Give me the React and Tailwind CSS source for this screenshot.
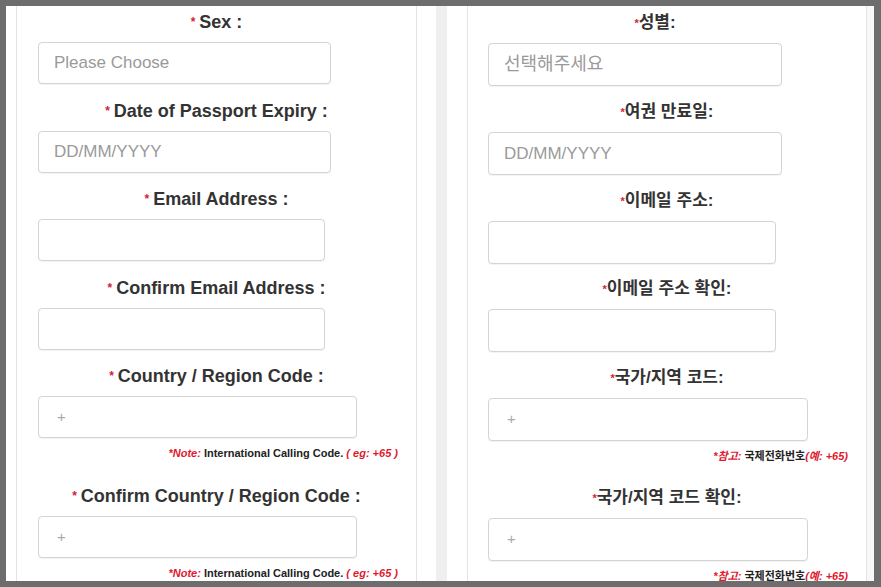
const leftFields = [
  { label: "Sex :", placeholder: "Please Choose", w: "w-[293px]" },
  { label: "Date of Passport Expiry :", placeholder: "DD/MM/YYYY", w: "w-[293px]" },
  { label: "Email Address :", placeholder: "", w: "w-[287px]" },
  { label: "Confirm Email Address :", placeholder: "", w: "w-[287px]" },
  { label: "Country / Region Code :", placeholder: "+", w: "w-[319px]", note: true },
  { label: "Confirm Country / Region Code :", placeholder: "+", w: "w-[319px]", note: true },
];

const rightFields = [
  { label: "성별:", placeholder: "선택해주세요", w: "w-[294px]", shift: true },
  { label: "여권 만료일:", placeholder: "DD/MM/YYYY", w: "w-[294px]" },
  { label: "이메일 주소:", placeholder: "", w: "w-[288px]" },
  { label: "이메일 주소 확인:", placeholder: "", w: "w-[288px]" },
  { label: "국가/지역 코드:", placeholder: "+", w: "w-[320px]", note: true },
  { label: "국가/지역 코드 확인:", placeholder: "+", w: "w-[320px]", note: true },
];

const EN = { fontFamily: '"Liberation Sans", Arial, sans-serif' };
const KR = { fontFamily: '"Liberation Sans", "Noto Sans CJK KR", sans-serif' };

function Field({ f, kr }) {
  let gap = kr ? "mb-[15.75px]" : "mb-[16.5px]";
  if (f.note) gap = kr ? "mb-[25px]" : "mb-[26px]";
  return (
    <div className={gap}>
      <div
        className={
          "h-5 leading-5 mb-[10px] text-center font-bold text-[#333] " +
          (kr ? "text-[17px]" : "text-[18px]") +
          (f.shift ? " pr-[24px]" : "")
        }
      >
        <span className={kr ? "text-[#d0233a] text-[11px] align-top" : "text-[#d0233a] text-[12px] align-top mr-[4px]"}>*</span>
        {f.label}
      </div>
      <div
        className={
          "rounded-[4px] border border-[#d4d4d4] bg-white shadow-[0_1px_1px_rgba(0,0,0,0.05)] flex items-center pl-[15px] text-[#9a9a9a] " +
          f.w +
          (kr ? " ml-[20px] h-[43px]" : " ml-[21px] h-[42px]") +
          (kr && f.placeholder === "선택해주세요" ? " text-[18px]" : " text-[17px]")
        }
      >
        <span className={f.placeholder === "+" ? "text-[15px] pl-[3px] text-[#aaa]" : ""}>{f.placeholder}</span>
      </div>
      {f.note && (
        <div className="mt-[9px] h-[13px] leading-[13px] text-right pr-[18px] text-[11px] font-bold text-[#222]">
          {kr ? (
            <>
              <span className="text-[#e0192f] italic">*참고:</span> 국제전화번호
              <span className="text-[#e0192f] italic">(예: +65)</span>
            </>
          ) : (
            <>
              <span className="text-[#e0192f] italic">*Note:</span> International Calling Code.{" "}
              <span className="text-[#e0192f] italic">( eg: +65 )</span>
            </>
          )}
        </div>
      )}
    </div>
  );
}

function Panel({ fields, kr, top }) {
  return (
    <div
      className={"h-full overflow-hidden border-x border-[#e4e4e4] bg-white " + top}
      style={kr ? KR : EN}
    >
      {fields.map((f) => (
        <Field key={f.label} f={f} kr={kr} />
      ))}
    </div>
  );
}

export default function App() {
  return (
    <div className="w-[881px] h-[587px] bg-[#6d6d6d] pt-[6px] pl-[6px] pr-[7px] pb-[6px]">
      <div className="h-full bg-white flex overflow-hidden">
        <div className="w-[10px] shrink-0" />
        <div className="w-[401px] shrink-0">
          <Panel fields={leftFields} kr={false} top="pt-[6px]" />
        </div>
        <div className="w-[50px] shrink-0 flex">
          <div className="w-[19px]" />
          <div className="w-[11px] bg-[#efefef]" />
        </div>
        <div className="w-[400px] shrink-0">
          <Panel fields={rightFields} kr={true} top="pt-[7px]" />
        </div>
        <div className="flex-1 bg-[#f7f7f7]" />
      </div>
    </div>
  );
}
